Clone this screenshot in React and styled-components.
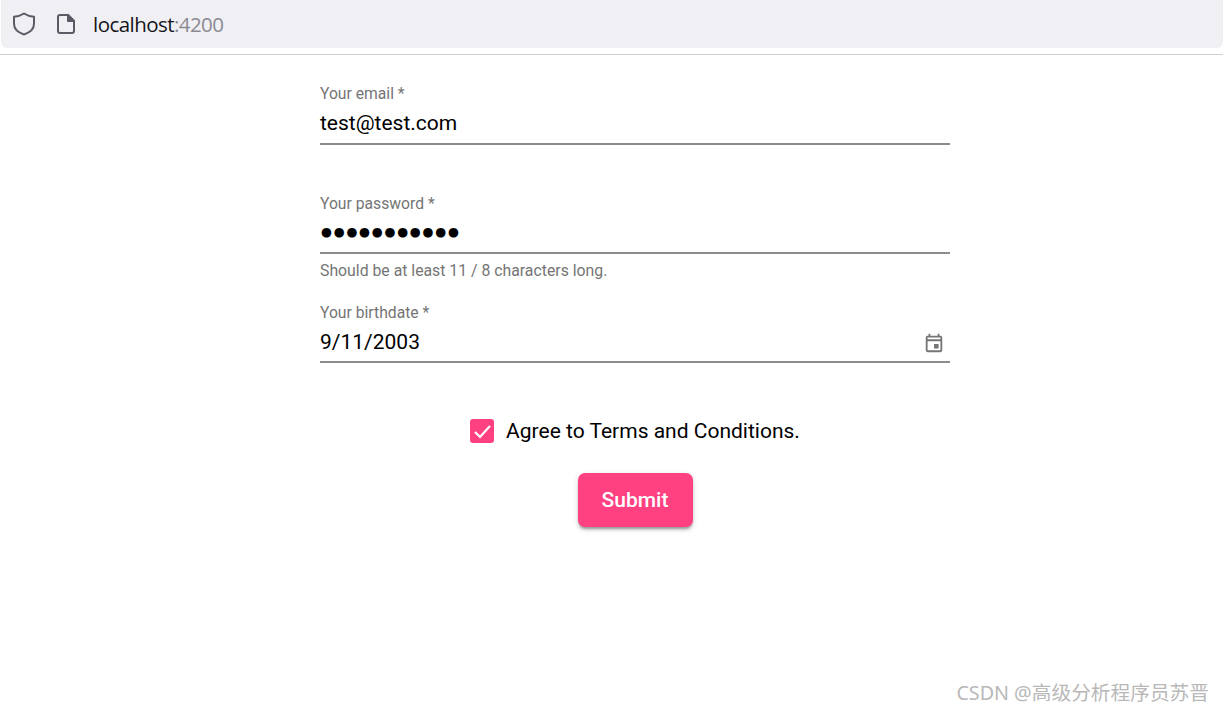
import React from 'react';
import styled, { createGlobalStyle } from 'styled-components';
import { MdOutlineEvent } from 'react-icons/md';

const GlobalStyle = createGlobalStyle`
  html, body {
    margin: 0;
    padding: 0;
    background: #fff;
    font-family: Roboto, "Liberation Sans", sans-serif;
  }
`;

const Page = styled.div`
  position: relative;
  height: 713px;
  overflow: hidden;
`;

const BrowserBar = styled.header`
  height: 55px;
  box-sizing: border-box;
  border-bottom: 1px solid #cfcfd3;
  padding: 0 0 6px 1px;
`;

const AddressBox = styled.div`
  height: 48px;
  box-sizing: border-box;
  background: #f0f0f4;
  border-radius: 0 0 6px 6px;
  display: flex;
  align-items: center;
  padding: 0 0 0 11px;
  color: #5b5b66;
`;

const PageIcon = styled.svg`
  width: 24px;
  height: 24px;
  fill: none;
  stroke: currentColor;
  stroke-width: 2;
  stroke-linejoin: round;
  margin-right: ${(p) => p.$gap}px;
`;

const Url = styled.div`
  font-family: "Open Sans", "Noto Sans", sans-serif;
  font-size: 20.5px;
  letter-spacing: -0.55px;
  color: #15141a;
`;

const Port = styled.span`
  color: #8a8a92;
`;

const Form = styled.form`
  width: 630px;
  margin: 30px auto 0 320px;
  display: flex;
  flex-direction: column;
`;

const Field = styled.div`
  height: 109px;
  display: flex;
  flex-direction: column;
`;

const Label = styled.label`
  font-size: 15.7px;
  line-height: 18px;
  margin-top: ${(p) => (p.$first ? -1 : 0)}px;
  margin-bottom: ${(p) => (p.$first ? 1 : 0)}px;
  padding-top: 1px;
  color: #757575;
`;

const ValueRow = styled.div`
  height: 41px;
  margin-top: 0;
  box-sizing: border-box;
  border-bottom: 2px solid #8c8c8c;
  display: flex;
  align-items: center;
  justify-content: space-between;
  padding-right: 5px;
  padding-top: ${(p) => (p.$date ? 2 : 0)}px;
  padding-bottom: 2px;
  color: #000;
  font-size: 21px;
`;

const Dots = styled.span`
  font-family: "DejaVu Sans", sans-serif;
  font-size: 12.6px;
  letter-spacing: 1.7px;
  margin-left: 1px;
`;

const Hint = styled.div`
  margin-top: 8px;
  font-size: 15.8px;
  line-height: 18px;
  color: #757575;
`;

const CalendarIcon = styled(MdOutlineEvent)`
  width: 22px;
  height: 22px;
  color: #757575;
  margin-top: 3px;
`;

const Agree = styled.div`
  display: flex;
  align-items: center;
  justify-content: center;
  gap: 12px;
  margin-top: 7px;
  height: 24px;
  font-size: 21px;
  color: #000;
`;

const CheckBox = styled.span`
  width: 24px;
  height: 24px;
  border-radius: 3px;
  background: #ff4081;
  display: flex;
`;

const CheckMark = styled.svg`
  width: 24px;
  height: 24px;
  fill: none;
  stroke: #fff;
  stroke-width: 2.2;
`;

const Submit = styled.button`
  align-self: center;
  margin-top: 30px;
  width: 115px;
  height: 54px;
  border: 0;
  border-radius: 7px;
  background: #ff4081;
  color: #fff;
  font-family: Roboto, sans-serif;
  font-size: 21px;
  font-weight: 500;
  box-shadow: 0 3px 3px -1px rgba(0, 0, 0, 0.35), 0 2px 6px 0 rgba(0, 0, 0, 0.15);
`;

const Watermark = styled.div`
  position: absolute;
  right: 14px;
  bottom: 7px;
  font-family: "Noto Sans", "Noto Sans CJK SC", sans-serif;
  font-size: 19.7px;
  color: #b8b8b8;
`;

export default function App() {
  return (
    <Page>
      <GlobalStyle />
      <BrowserBar>
        <AddressBox>
          <PageIcon viewBox="0 0 24 24" $gap={18}>
            <path d="M12 1.500c3 2 6 3 10 3.300v7c0 5-4 8.700-10 10.700-6-2-10-5.700-10-10.700v-7c4-.3 7-1.300 10-3.300z" />
          </PageIcon>
          <PageIcon viewBox="0 0 24 24" $gap={15}>
            <path d="M6 3h8l6 6v10a2 2 0 0 1-2 2H6a2 2 0 0 1-2-2V5a2 2 0 0 1 2-2z" />
            <path d="M14 3l6 6h-6z" fill="currentColor" />
          </PageIcon>
          <Url>localhost<Port>:4200</Port></Url>
        </AddressBox>
      </BrowserBar>
      <Form>
        <Field>
          <Label $first>Your email *</Label>
          <ValueRow>test@test.com</ValueRow>
        </Field>
        <Field>
          <Label>Your password *</Label>
          <ValueRow><Dots>●●●●●●●●●●●</Dots></ValueRow>
          <Hint>Should be at least 11 / 8 characters long.</Hint>
        </Field>
        <Field>
          <Label>Your birthdate *</Label>
          <ValueRow $date>9/11/2003<CalendarIcon /></ValueRow>
        </Field>
        <Agree>
          <CheckBox>
            <CheckMark viewBox="0 0 24 24"><path d="M5 13l5 5L20 7" /></CheckMark>
          </CheckBox>
          Agree to Terms and Conditions.
        </Agree>
        <Submit type="button">Submit</Submit>
      </Form>
      <Watermark>CSDN @高级分析程序员苏晋</Watermark>
    </Page>
  );
}
